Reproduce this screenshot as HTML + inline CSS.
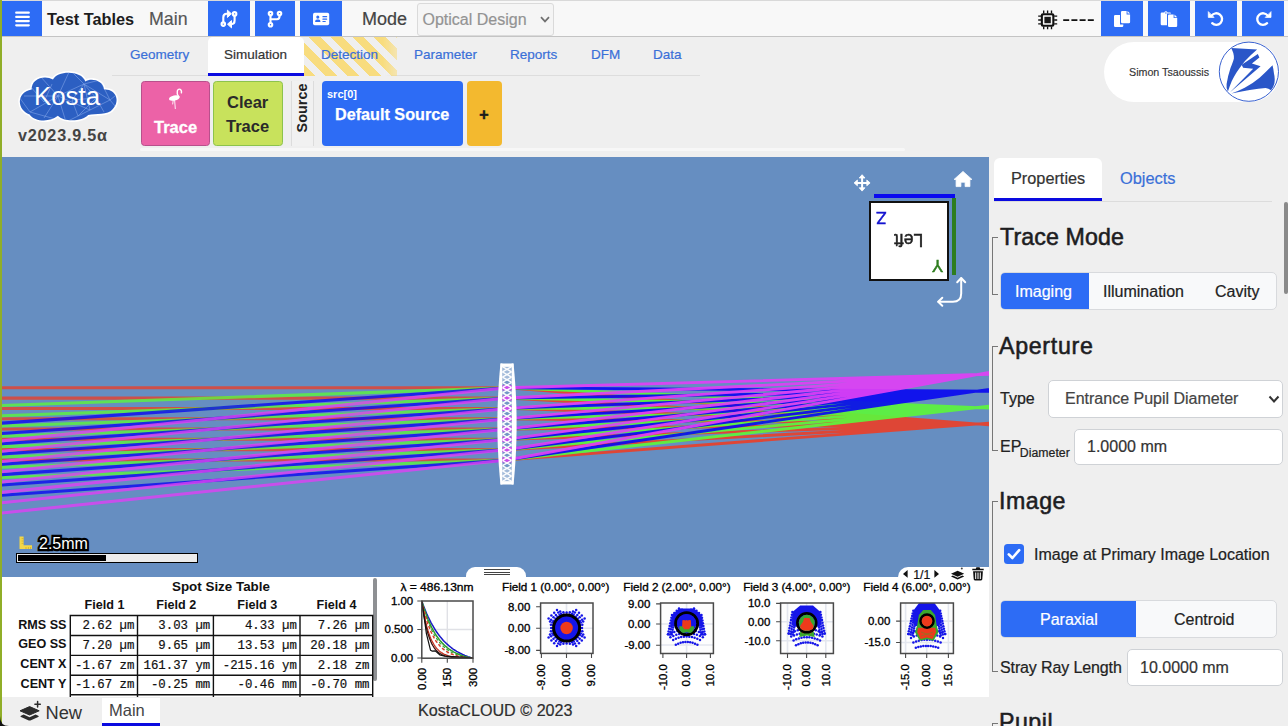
<!DOCTYPE html>
<html><head><meta charset="utf-8">
<style>
*{box-sizing:border-box;margin:0;padding:0}
html,body{width:1288px;height:726px;overflow:hidden;background:#efefef;font-family:"Liberation Sans",sans-serif;color:#222}
.abs{position:absolute}
#strip{left:0;top:0;width:2px;height:726px;background:#90ae28}
#topbar{left:2px;top:0;width:1286px;height:37px;background:#f8f8f8;border-top:1px solid #d9d9d9;border-bottom:1px solid #c4c4c4}
.bbtn{position:absolute;top:1px;height:35.2px;background:#2d6cf5}
.t{position:absolute;white-space:nowrap;line-height:1}
#viewport{left:2px;top:157px;width:987px;height:420px;background:#668ec1;overflow:hidden}
.tab{position:absolute;font-size:13.5px;-webkit-text-stroke:0.2px;color:#3a6fd8;white-space:nowrap;line-height:1}
.fs{position:absolute;border-left:1px solid #777;width:6px}
.fs:before,.fs:after{content:"";position:absolute;left:0;width:5px;height:1px;background:#777}
.fs:before{top:0}.fs:after{bottom:0}
.h2{position:absolute;font-weight:normal;font-size:23.2px;line-height:1;color:#1d1d1f;white-space:nowrap;letter-spacing:-0.1px;-webkit-text-stroke:0.55px #1d1d1f}
.inp{position:absolute;background:#fff;border:1px solid #cfd2d6;border-radius:5px}
.lbl{position:absolute;-webkit-text-stroke:0.22px;font-size:16px;line-height:1;color:#222;white-space:nowrap}
.bg{position:absolute;border:1px solid #d8dadd;border-radius:5px;background:#f8f9fa;overflow:hidden}
.bg .on{position:absolute;left:-1px;top:-1px;bottom:-1px;background:#2d6cf5}
table.sp{position:absolute;border-collapse:collapse;font-family:"Liberation Mono",monospace;font-size:12.4px}
</style></head><body>
<div id="strip" class="abs"></div>
<div id="topbar" class="abs"></div>

<!-- hamburger -->
<div class="bbtn" style="left:2px;width:40px">
<svg class="abs" style="left:10px;top:10px" width="22" height="17" viewBox="0 0 22 17"><path d="M4.2 1.7H16.8M4.2 5.9H16.8M4.2 10.1H16.8M4.2 14.3H16.8" stroke="#fff" stroke-width="2.2" stroke-linecap="round"/></svg>
</div>
<div class="t" style="left:47px;top:11px;font-size:16.3px;font-weight:bold;color:#1c1c1e">Test Tables</div>
<div class="t" style="left:149px;top:11.2px;font-size:17.8px;color:#555;-webkit-text-stroke:0.15px #555">Main</div>

<div class="bbtn" style="left:208px;width:42px" id="b1"></div>
<div class="bbtn" style="left:255px;width:40px" id="b2"></div>
<div class="bbtn" style="left:300px;width:42px" id="b3"></div>
<div class="t" style="left:362px;top:10px;font-size:18px;color:#444;-webkit-text-stroke:0.2px #444">Mode</div>
<div class="abs" style="left:417px;top:2.6px;width:136.5px;height:33.4px;border:1px solid #dadada;border-radius:3px;background:#f5f5f5"></div>
<div class="t" style="left:422.5px;top:11.8px;font-size:16px;color:#939393;-webkit-text-stroke:0.2px #939393">Optical Design</div>
<svg class="abs" style="left:540px;top:16px" width="10" height="8" viewBox="0 0 10 8"><path d="M1 1.2L5 5.4L9 1.2" stroke="#707070" stroke-width="1.7" fill="none"/></svg>

<div class="bbtn" style="left:1101px;width:42px" id="b4"></div>
<div class="bbtn" style="left:1148px;width:42px" id="b5"></div>
<div class="bbtn" style="left:1195px;width:42px" id="b6"></div>
<div class="bbtn" style="left:1242px;width:42px" id="b7"></div>


<svg class="abs" style="left:0;top:0" width="1288" height="40" viewBox="0 0 1288 40" fill="none" stroke="#fff" stroke-linecap="round" stroke-linejoin="round">
<!-- code-compare -->
<g stroke-width="2.1">
<circle cx="223.3" cy="24.1" r="1.75"/>
<circle cx="234.6" cy="13.9" r="1.75"/>
<path d="M223.3 22.2V17.4Q223.3 13.8 226.6 13.8H228"/>
<path d="M234.6 15.8V20.6Q234.6 24.2 231.3 24.2H230.4"/>
</g>
<path d="M227.7 10.4L231.4 13.8L227.7 17.2Z" fill="#fff" stroke-width="1"/>
<path d="M231.2 20.8L227.5 24.2L231.2 27.6Z" fill="#fff" stroke-width="1"/>
<!-- code-branch -->
<g stroke-width="2.1">
<circle cx="270.5" cy="13.6" r="1.75"/>
<circle cx="279.5" cy="13.6" r="1.75"/>
<circle cx="270.5" cy="24.8" r="1.75"/>
<path d="M270.5 15.6V22.8"/>
<path d="M279.5 15.6V16.6Q279.5 19.2 277 19.2H270.6"/>
</g>
<!-- address card -->
<rect x="313" y="12.8" width="16.2" height="12.4" rx="1.7" fill="#fff" stroke="none"/>
<g stroke="none" fill="#2d6cf5">
<circle cx="317.8" cy="17.1" r="1.55"/>
<path d="M315.1 21.9Q315.1 19.6 317 19.6H318.6Q320.5 19.6 320.5 21.9Z"/>
<rect x="322.4" y="16.1" width="4.8" height="1.2" rx="0.5"/>
<rect x="322.4" y="18.5" width="4.8" height="1.2" rx="0.5"/>
<rect x="322.4" y="20.9" width="3.4" height="1.2" rx="0.5"/>
</g>
<!-- chip -->
<g stroke="#111" stroke-width="1.35" stroke-linecap="butt">
<path d="M1043.7 10.6V13.4M1047.6 10.6V13.4M1051.5 10.6V13.4M1043.7 26.6V29.2M1047.6 26.6V29.2M1051.5 26.6V29.2M1038.2 16.1H1041M1038.2 20H1041M1038.2 23.9H1041M1054.2 16.1H1057.2M1054.2 20H1057.2M1054.2 23.9H1057.2"/>
</g>
<rect x="1040.8" y="13.2" width="13.6" height="13.6" rx="2" fill="#111" stroke="none"/>
<rect x="1042.9" y="15.3" width="9.4" height="9.4" rx="0.6" fill="#f8f8f8" stroke="none"/>
<rect x="1044.4" y="16.8" width="6.4" height="6.4" fill="#1a1a1a" stroke="none"/>
<path d="M1063.2 20.2H1095" stroke="#111" stroke-width="1.8" stroke-dasharray="6 2.2" stroke-linecap="butt"/>
<!-- copy -->
<g stroke="none" fill="#fff">
<path d="M1115.2 15H1120V24.4H1123.3V25.8Q1123.3 27 1122.1 27H1115.2Q1114 27 1114 25.8V16.2Q1114 15 1115.2 15Z"/>
<path d="M1122.2 10.9H1126.6V14.4H1130.1V22Q1130.1 23.2 1128.9 23.2H1122.2Q1121 23.2 1121 22V12.1Q1121 10.9 1122.2 10.9Z"/>
<path d="M1127.5 10.9L1130.1 13.5H1127.5Z"/>
</g>
<!-- paste -->
<g stroke="none" fill="#fff">
<path d="M1161.9 12.4H1164.3Q1164.6 11.3 1165.9 11.3Q1167.2 11.3 1167.5 12.4H1169.9Q1171.1 12.4 1171.1 13.6H1167V25.2H1161.9Q1160.7 25.2 1160.7 24V13.6Q1160.7 12.4 1161.9 12.4Z"/>
<path d="M1169.2 14.6H1173.6V18.1H1177.2V25.8Q1177.2 27 1176 27H1169.2Q1168 27 1168 25.8V15.8Q1168 14.6 1169.2 14.6Z"/>
<path d="M1174.5 14.6L1177.2 17.3H1174.5Z"/>
</g>
<circle cx="1165.9" cy="13" r="0.7" fill="#2d6cf5" stroke="none"/>
<!-- undo -->
<path d="M1211.6 15.6A5.8 5.8 0 1 1 1212.2 23.2" stroke-width="2.35"/>
<path d="M1208.3 12V17.4H1213.7Z" fill="#fff" stroke-width="0.8"/>
<!-- redo -->
<path d="M1267.7 15.6A5.8 5.8 0 1 0 1267.1 23.2" stroke-width="2.35"/>
<path d="M1271 12V17.4H1265.6Z" fill="#fff" stroke-width="0.8"/>
</svg>

<!-- tabs row -->
<div class="abs" style="left:112px;top:75px;width:588px;height:1px;background:#dddddd"></div>
<div class="tab" style="left:130px;top:47.7px">Geometry</div>
<div class="abs" style="left:208px;top:37px;width:96px;height:39px;background:#fff;border-radius:5px 5px 0 0;border-bottom:3.5px solid #0a0ae0"></div>
<div class="tab" style="left:224px;top:47.7px;color:#333">Simulation</div>
<div class="abs" style="left:304px;top:37px;width:93px;height:38.5px;-webkit-mask-image:linear-gradient(90deg,#000 85%,rgba(0,0,0,.55));background:repeating-linear-gradient(45deg,#f8dc7e 0 8.4px,#efefef 8.4px 15.4px)"></div>
<div class="tab" style="left:321px;top:47.7px">Detection</div>
<div class="tab" style="left:414px;top:47.7px">Parameter</div>
<div class="tab" style="left:510px;top:47.7px">Reports</div>
<div class="tab" style="left:591px;top:47.7px">DFM</div>
<div class="tab" style="left:653px;top:47.7px">Data</div>

<!-- toolbar -->
<div class="abs" style="left:141px;top:81px;width:69px;height:65px;background:#ec62a7;border:1px solid #b8508c;border-radius:3.5px"></div>
<div class="t" style="left:154px;top:119px;font-size:16.5px;font-weight:bold;color:#fff;-webkit-text-stroke:0.3px #fff">Trace</div>
<div class="abs" style="left:213px;top:81px;width:70px;height:65px;background:#c8e25c;border:1px solid #8dc34c;border-radius:3.5px"></div>
<div class="t" style="left:227px;top:94px;font-size:16.5px;font-weight:bold;color:#2a2a2a">Clear</div>
<div class="t" style="left:226px;top:118px;font-size:16.5px;font-weight:bold;color:#2a2a2a">Trace</div>
<div class="abs" style="left:291px;top:81px;width:23px;height:65px;border-left:1px solid #dcdcdc;border-right:1px solid #dcdcdc;background:#f1f1f1"></div>
<div class="t" style="left:302px;top:108px;font-size:14.4px;font-weight:bold;color:#222;transform:translate(-50%,-50%) rotate(-90deg)">Source</div>
<div class="abs" style="left:322px;top:81px;width:141px;height:65px;background:#2d6cf5;border-radius:4px"></div>
<div class="t" style="left:327px;top:89px;font-size:11px;font-weight:bold;color:#fff">src[0]</div>
<div class="t" style="left:335px;top:106px;font-size:16.2px;font-weight:bold;color:#fff;-webkit-text-stroke:0.25px #fff">Default Source</div>
<div class="abs" style="left:466.5px;top:81px;width:35.5px;height:65px;background:#f3b92f;border-radius:4px"></div>
<div class="t" style="left:479.3px;top:106.5px;font-size:16px;font-weight:bold;color:#1c1c1c;-webkit-text-stroke:0.5px #1c1c1c">+</div>
<div class="abs" style="left:140px;top:148px;width:765px;height:3px;background:#f7f7f7;border-radius:2px"></div>

<!-- logo -->
<svg class="abs" style="left:14px;top:68px" width="110" height="58" viewBox="14 68 110 58">
<defs><clipPath id="cl"><path id="cloudp" d="M31.7 89.6C31 78.5 45 74.5 53 79.6C56.5 70.5 81.5 69.5 85.4 81.5C90.5 77.5 103.5 80 104 89.6C115.5 88.5 121 101 112.6 109.2C108 115.2 95.5 113.4 88.2 115C82 122 63.5 122 57.9 115.8C50 122.3 35 122 29.6 114.4C17.2 110.5 15.4 92.5 31.7 89.6Z"/></clipPath></defs>
<path d="M31.7 89.6C31 78.5 45 74.5 53 79.6C56.5 70.5 81.5 69.5 85.4 81.5C90.5 77.5 103.5 80 104 89.6C115.5 88.5 121 101 112.6 109.2C108 115.2 95.5 113.4 88.2 115C82 122 63.5 122 57.9 115.8C50 122.3 35 122 29.6 114.4C17.2 110.5 15.4 92.5 31.7 89.6Z" fill="#fff" stroke="#fff" stroke-width="3.2" stroke-linejoin="round"/>
<path d="M31.7 89.6C31 78.5 45 74.5 53 79.6C56.5 70.5 81.5 69.5 85.4 81.5C90.5 77.5 103.5 80 104 89.6C115.5 88.5 121 101 112.6 109.2C108 115.2 95.5 113.4 88.2 115C82 122 63.5 122 57.9 115.8C50 122.3 35 122 29.6 114.4C17.2 110.5 15.4 92.5 31.7 89.6Z" fill="#2c5fc2"/>
<g clip-path="url(#cl)" stroke="#8aacec" stroke-width="0.6" opacity="0.9" fill="none">
<path d="M14 90L40 76L58 96L30 112ZM40 76L70 70L58 96L84 84L70 70M84 84L100 80L110 100L84 84L90 110L58 96L66 122L30 112M90 110L110 100L120 112M66 122L90 110M24 96L58 96M44 118L58 96M100 80L120 92L110 100M30 86L44 102L52 84M72 100L84 84L96 98L72 100L78 116L96 98L104 112"/>
</g>
<text x="34" y="105.2" font-family="Liberation Sans, sans-serif" font-size="25.5" fill="#fff" textLength="66" lengthAdjust="spacingAndGlyphs">Kosta</text>
</svg>
<div class="t" style="left:18px;top:127px;font-size:16.2px;font-weight:bold;color:#444;letter-spacing:0.78px">v2023.9.5α</div>

<!-- user -->
<div class="abs" style="left:1104px;top:42px;width:176px;height:60px;background:#fff;border-radius:30px"></div>
<div class="t" style="left:1129px;top:67px;font-size:10.7px;color:#333;-webkit-text-stroke:0.15px #333">Simon Tsaoussis</div>
<svg class="abs" style="left:1218px;top:41px" width="62" height="62" viewBox="0 0 62 62">
<circle cx="30.9" cy="30.7" r="29.6" fill="#fff" stroke="#3a62d0" stroke-width="1"/>
<g fill="#2a56c8">
<path d="M13.3 6.9L39.1 8.4Q33 13.5 27 20Q18 31 13.8 40Q11.5 45.5 9.9 50.6Q8 47 8.6 43Q9.8 35 12.5 27Q15.2 20.5 15.9 17.5Q16 14.5 15.3 11.9Z"/>
<path d="M39.8 13.1L23.7 23.8L25.1 26.8L35.2 27.7L11.8 51.4L42.6 25.3L33.9 22.6L41.4 16.6Z"/>
<path d="M54.5 24.3Q48 31 41.6 36.7Q34 43 26.7 46.8Q20 50.3 13.3 52.6Q22 50.5 31.7 49Q41 47.3 47.6 46.9Q50.5 47.3 53 49.3Q55.5 46 56.4 42.4Q57.2 37 56 32.7Q55.6 28.5 54.5 24.3Z"/>
</g></svg>

<!-- viewport -->
<div id="viewport" class="abs"></div>
<svg class="abs" style="left:0;top:0" width="1288" height="726" viewBox="0 0 1288 726" font-family="Liberation Sans, sans-serif">
<defs><clipPath id="vp"><rect x="2" y="157" width="987" height="420"/></clipPath></defs>
<g clip-path="url(#vp)">
<path d="M0,387.80L507.0,387.80M0,398.10L507.0,398.10M0,408.40L507.0,408.40M0,418.70L507.0,418.70M0,429.00L507.0,429.00M0,439.30L507.0,439.30M0,449.60L507.0,449.60M0,459.90L507.0,459.90" stroke="#e8402a" stroke-width="3.05" stroke-opacity="0.8" fill="none"/>
<path d="M0,405.50L507.0,387.80M0,415.80L507.0,398.10M0,426.10L507.0,408.40M0,436.40L507.0,418.70M0,446.70L507.0,429.00M0,457.00L507.0,439.30M0,467.30L507.0,449.60M0,477.60L507.0,459.90" stroke="#5cf53c" stroke-width="3.05" stroke-opacity="0.8" fill="none"/>
<path d="M0,423.25L507.0,387.80M0,433.55L507.0,398.10M0,443.85L507.0,408.40M0,454.15L507.0,418.70M0,464.45L507.0,429.00M0,474.75L507.0,439.30M0,485.05L507.0,449.60M0,495.35L507.0,459.90" stroke="#0a0af0" stroke-width="3.05" stroke-opacity="0.8" fill="none"/>
<path d="M0,441.09L507.0,387.80M0,451.39L507.0,398.10M0,461.69L507.0,408.40M0,471.99L507.0,418.70M0,482.29L507.0,429.00M0,492.59L507.0,439.30M0,502.89L507.0,449.60M0,513.19L507.0,459.90" stroke="#e040f5" stroke-width="3.05" stroke-opacity="0.8" fill="none"/>
<path d="M507.0,387.80L994,425.31M507.0,398.10L994,424.94M507.0,408.40L994,424.56M507.0,418.70L994,424.19M507.0,429.00L994,423.82M507.0,439.30L994,423.45M507.0,449.60L994,423.07M507.0,459.90L994,422.70" stroke="#e8402a" stroke-width="2.85" stroke-opacity="0.92" fill="none"/>
<path d="M507.0,387.80L994,408.30M507.0,398.10L994,407.93M507.0,408.40L994,407.56M507.0,418.70L994,407.19M507.0,429.00L994,406.81M507.0,439.30L994,406.44M507.0,449.60L994,406.07M507.0,459.90L994,405.70" stroke="#5cf53c" stroke-width="2.85" stroke-opacity="0.92" fill="none"/>
<path d="M507.0,387.80L994,391.26M507.0,398.10L994,390.88M507.0,408.40L994,390.51M507.0,418.70L994,390.14M507.0,429.00L994,389.76M507.0,439.30L994,389.39M507.0,449.60L994,389.02M507.0,459.90L994,388.65" stroke="#0a0af0" stroke-width="2.85" stroke-opacity="0.92" fill="none"/>
<path d="M507.0,387.80L994,374.12M507.0,398.10L994,373.75M507.0,408.40L994,373.38M507.0,418.70L994,373.01M507.0,429.00L994,372.63M507.0,439.30L994,372.26M507.0,449.60L994,371.89M507.0,459.90L994,371.52" stroke="#e040f5" stroke-width="2.85" stroke-opacity="0.92" fill="none"/>
<path d="M500.50,363.50L500.00,368.54L499.55,373.58L499.14,378.62L498.78,383.67L498.45,388.71L498.18,393.75L497.94,398.79L497.74,403.83L497.59,408.88L497.49,413.92L497.42,418.96L497.40,424.00L497.42,429.04L497.49,434.08L497.59,439.12L497.74,444.17L497.94,449.21L498.18,454.25L498.45,459.29L498.78,464.33L499.14,469.38L499.55,474.42L500.00,479.46L500.50,484.50L502.40,484.50L502.40,479.46L502.40,474.42L502.40,469.38L502.40,464.33L502.40,459.29L502.40,454.25L502.40,449.21L502.40,444.17L502.40,439.12L502.40,434.08L502.40,429.04L502.40,424.00L502.40,418.96L502.40,413.92L502.40,408.88L502.40,403.83L502.40,398.79L502.40,393.75L502.40,388.71L502.40,383.67L502.40,378.62L502.40,373.58L502.40,368.54L502.40,363.50Z" fill="#fff"/>
<path d="M513.50,363.50L514.00,368.54L514.45,373.58L514.86,378.62L515.22,383.67L515.55,388.71L515.83,393.75L516.06,398.79L516.26,403.83L516.41,408.88L516.51,413.92L516.58,418.96L516.60,424.00L516.58,429.04L516.51,434.08L516.41,439.12L516.26,444.17L516.06,449.21L515.83,454.25L515.55,459.29L515.22,464.33L514.86,469.38L514.45,474.42L514.00,479.46L513.50,484.50L511.60,484.50L511.60,479.46L511.60,474.42L511.60,469.38L511.60,464.33L511.60,459.29L511.60,454.25L511.60,449.21L511.60,444.17L511.60,439.12L511.60,434.08L511.60,429.04L511.60,424.00L511.60,418.96L511.60,413.92L511.60,408.88L511.60,403.83L511.60,398.79L511.60,393.75L511.60,388.71L511.60,383.67L511.60,378.62L511.60,373.58L511.60,368.54L511.60,363.50Z" fill="#fff"/>
<rect x="500.5" y="363.5" width="13.0" height="3.4" fill="#fff"/>
<rect x="500.5" y="481.1" width="13.0" height="3.4" fill="#fff"/>
<rect x="502.4" y="385.20" width="9.2" height="5.2" fill="#c63fe8"/>
<rect x="502.4" y="395.50" width="9.2" height="5.2" fill="#c63fe8"/>
<rect x="502.4" y="405.80" width="9.2" height="5.2" fill="#c63fe8"/>
<rect x="502.4" y="416.10" width="9.2" height="5.2" fill="#c63fe8"/>
<rect x="502.4" y="426.40" width="9.2" height="5.2" fill="#c63fe8"/>
<rect x="502.4" y="436.70" width="9.2" height="5.2" fill="#c63fe8"/>
<rect x="502.4" y="447.00" width="9.2" height="5.2" fill="#c63fe8"/>
<rect x="502.4" y="457.30" width="9.2" height="5.2" fill="#c63fe8"/>
<path d="M502.4,366.70L511.6,371.91M511.6,366.70L502.4,371.91M502.4,371.91L511.6,377.12M511.6,371.91L502.4,377.12M502.4,377.12L511.6,382.33M511.6,377.12L502.4,382.33M502.4,382.33L511.6,387.54M511.6,382.33L502.4,387.54M502.4,387.54L511.6,392.75M511.6,387.54L502.4,392.75M502.4,392.75L511.6,397.95M511.6,392.75L502.4,397.95M502.4,397.95L511.6,403.16M511.6,397.95L502.4,403.16M502.4,403.16L511.6,408.37M511.6,403.16L502.4,408.37M502.4,408.37L511.6,413.58M511.6,408.37L502.4,413.58M502.4,413.58L511.6,418.79M511.6,413.58L502.4,418.79M502.4,418.79L511.6,424.00M511.6,418.79L502.4,424.00M502.4,424.00L511.6,429.21M511.6,424.00L502.4,429.21M502.4,429.21L511.6,434.42M511.6,429.21L502.4,434.42M502.4,434.42L511.6,439.63M511.6,434.42L502.4,439.63M502.4,439.63L511.6,444.84M511.6,439.63L502.4,444.84M502.4,444.84L511.6,450.05M511.6,444.84L502.4,450.05M502.4,450.05L511.6,455.25M511.6,450.05L502.4,455.25M502.4,455.25L511.6,460.46M511.6,455.25L502.4,460.46M502.4,460.46L511.6,465.67M511.6,460.46L502.4,465.67M502.4,465.67L511.6,470.88M511.6,465.67L502.4,470.88M502.4,470.88L511.6,476.09M511.6,470.88L502.4,476.09M502.4,476.09L511.6,481.30M511.6,476.09L502.4,481.30" stroke="#fff" stroke-width="1.45" fill="none" opacity="0.96"/>
<rect x="502.4" y="366.7" width="9.2" height="14" fill="#fff" opacity="0.35"/>
<rect x="502.4" y="467.3" width="9.2" height="14" fill="#fff" opacity="0.35"/>
<rect x="502.4" y="366.7" width="9.2" height="114.60000000000002" fill="#fff" opacity="0.08"/>
</g>
</svg>

<!-- view cube -->
<div class="abs" style="left:874px;top:194px;width:81px;height:4px;background:#0a0af0"></div>
<div class="abs" style="left:952px;top:198px;width:4px;height:77px;background:#2e7d1e"></div>
<div class="abs" style="left:869px;top:201px;width:80px;height:80px;background:#fff;border:2px solid #111"></div>
<div class="t" style="left:876px;top:209px;font-size:17px;color:#1414d0;-webkit-text-stroke:0.5px #1414d0;transform:rotate(180deg)">Z</div>
<div class="t" style="left:894px;top:230px;font-size:17.6px;color:#222;-webkit-text-stroke:0.45px #222;transform:rotate(180deg)">Left</div>
<div class="t" style="left:932px;top:257px;font-size:17px;color:#2e7d1e;-webkit-text-stroke:0.5px #2e7d1e;transform:rotate(180deg)">Y</div>

<!-- scale bar -->
<div class="abs" style="left:16.2px;top:553px;width:181.6px;height:9.8px;background:#ececec;border:1px solid #000"></div>
<div class="abs" style="left:18.3px;top:555px;width:87.7px;height:5.8px;background:#000"></div>
<svg class="abs" style="left:30px;top:530px" width="70" height="26" viewBox="0 0 70 26"><text x="9" y="19" font-family="Liberation Sans, sans-serif" font-size="16" fill="#fff" stroke="#000" stroke-width="4.4" paint-order="stroke" stroke-linejoin="miter">2.5mm</text></svg>
<svg class="abs" style="left:19px;top:536px" width="14" height="14" viewBox="0 0 14 14"><path d="M0.5 0.5H4.6V9.2H13V13H0.5Z" fill="#f2d648"/><path d="M2.6 2.6H4.6M2.6 5H4.6M2.6 7.4H4.6M7 11V13M9.4 11V13M11.6 11V13" stroke="#c9a92c" stroke-width="0.7"/></svg>

<!-- bottom panel -->
<div class="abs" style="left:2px;top:576.5px;width:987px;height:120.9px;background:#fff"></div>
<div class="abs" style="left:466px;top:567px;width:60px;height:12px;background:#fff;border-radius:9px 9px 0 0"></div>
<div class="abs" style="left:483.5px;top:569px;width:26px;height:1px;background:#444"></div>
<div class="abs" style="left:483.5px;top:571.7px;width:26px;height:1px;background:#444"></div>
<div class="abs" style="left:483.5px;top:574.4px;width:26px;height:1px;background:#444"></div>
<div class="abs" style="left:898px;top:566.5px;width:91px;height:14px;background:#fff;border-radius:10px 0 0 0"></div>
<div class="t" style="left:913.2px;top:568.6px;font-size:12.3px;color:#111;-webkit-text-stroke:0.2px #111">1/1</div>


<div class="abs" style="left:373.2px;top:577.5px;width:3.8px;height:103.8px;background:#8e9093;border-radius:2px"></div>

<div class="t" style="left:172px;top:580px;font-size:13.4px;font-weight:bold;color:#111">Spot Size Table</div>
<svg class="abs" style="left:0;top:0" width="400" height="726" viewBox="0 0 400 726"><defs><clipPath id="tb"><rect x="2" y="577" width="372" height="120"/></clipPath></defs><g clip-path="url(#tb)">
<path d="M70.3,614.8V700M137.5,614.8V700M213.4,614.8V700M300.0,614.8V700M372.7,614.8V700M69.6,615.5H373.4M69.6,635.5H373.4M69.6,655.4H373.4M69.6,675.3H373.4M69.6,694.8H373.4" stroke="#111" stroke-width="1.4" fill="none"/></g></svg>
<div class="t" style="left:104.5px;top:599.3px;font-size:12.6px;font-weight:bold;color:#111;transform:translateX(-50%)">Field 1</div>
<div class="t" style="left:176.2px;top:599.3px;font-size:12.6px;font-weight:bold;color:#111;transform:translateX(-50%)">Field 2</div>
<div class="t" style="left:257.3px;top:599.3px;font-size:12.6px;font-weight:bold;color:#111;transform:translateX(-50%)">Field 3</div>
<div class="t" style="left:336.5px;top:599.3px;font-size:12.6px;font-weight:bold;color:#111;transform:translateX(-50%)">Field 4</div>
<div class="t" style="right:1221.5px;top:618.5px;font-size:12.6px;font-weight:bold;color:#111">RMS SS</div>
<div class="t" style="right:1153.7px;top:619.8px;-webkit-text-stroke:0.2px #111;font-family:'Liberation Mono',monospace;font-size:12.35px;color:#111;white-space:pre">2.62 µm</div>
<div class="t" style="right:1077.8px;top:619.8px;-webkit-text-stroke:0.2px #111;font-family:'Liberation Mono',monospace;font-size:12.35px;color:#111;white-space:pre">3.03 µm</div>
<div class="t" style="right:991.2px;top:619.8px;-webkit-text-stroke:0.2px #111;font-family:'Liberation Mono',monospace;font-size:12.35px;color:#111;white-space:pre">4.33 µm</div>
<div class="t" style="right:918.5px;top:619.8px;-webkit-text-stroke:0.2px #111;font-family:'Liberation Mono',monospace;font-size:12.35px;color:#111;white-space:pre">7.26 µm</div>
<div class="t" style="right:1221.5px;top:638.45px;font-size:12.6px;font-weight:bold;color:#111">GEO SS</div>
<div class="t" style="right:1153.7px;top:639.75px;-webkit-text-stroke:0.2px #111;font-family:'Liberation Mono',monospace;font-size:12.35px;color:#111;white-space:pre">7.20 µm</div>
<div class="t" style="right:1077.8px;top:639.75px;-webkit-text-stroke:0.2px #111;font-family:'Liberation Mono',monospace;font-size:12.35px;color:#111;white-space:pre">9.65 µm</div>
<div class="t" style="right:991.2px;top:639.75px;-webkit-text-stroke:0.2px #111;font-family:'Liberation Mono',monospace;font-size:12.35px;color:#111;white-space:pre">13.53 µm</div>
<div class="t" style="right:918.5px;top:639.75px;-webkit-text-stroke:0.2px #111;font-family:'Liberation Mono',monospace;font-size:12.35px;color:#111;white-space:pre">20.18 µm</div>
<div class="t" style="right:1221.5px;top:658.3499999999999px;font-size:12.6px;font-weight:bold;color:#111">CENT X</div>
<div class="t" style="right:1153.7px;top:659.6499999999999px;-webkit-text-stroke:0.2px #111;font-family:'Liberation Mono',monospace;font-size:12.35px;color:#111;white-space:pre">-1.67 zm</div>
<div class="t" style="right:1077.8px;top:659.6499999999999px;-webkit-text-stroke:0.2px #111;font-family:'Liberation Mono',monospace;font-size:12.35px;color:#111;white-space:pre">161.37 ym</div>
<div class="t" style="right:991.2px;top:659.6499999999999px;-webkit-text-stroke:0.2px #111;font-family:'Liberation Mono',monospace;font-size:12.35px;color:#111;white-space:pre">-215.16 ym</div>
<div class="t" style="right:918.5px;top:659.6499999999999px;-webkit-text-stroke:0.2px #111;font-family:'Liberation Mono',monospace;font-size:12.35px;color:#111;white-space:pre">2.18 zm</div>
<div class="t" style="right:1221.5px;top:678.05px;font-size:12.6px;font-weight:bold;color:#111">CENT Y</div>
<div class="t" style="right:1153.7px;top:679.3499999999999px;-webkit-text-stroke:0.2px #111;font-family:'Liberation Mono',monospace;font-size:12.35px;color:#111;white-space:pre">-1.67 zm</div>
<div class="t" style="right:1077.8px;top:679.3499999999999px;-webkit-text-stroke:0.2px #111;font-family:'Liberation Mono',monospace;font-size:12.35px;color:#111;white-space:pre">-0.25 mm</div>
<div class="t" style="right:991.2px;top:679.3499999999999px;-webkit-text-stroke:0.2px #111;font-family:'Liberation Mono',monospace;font-size:12.35px;color:#111;white-space:pre">-0.46 mm</div>
<div class="t" style="right:918.5px;top:679.3499999999999px;-webkit-text-stroke:0.2px #111;font-family:'Liberation Mono',monospace;font-size:12.35px;color:#111;white-space:pre">-0.70 mm</div>

<svg class="abs" style="left:0;top:0" width="1288" height="726" viewBox="0 0 1288 726" font-family="Liberation Sans, sans-serif" fill="#000">
<defs><clipPath id="bp"><rect x="378" y="577" width="612" height="120"/></clipPath></defs>
<g clip-path="url(#bp)" stroke="#000" stroke-width="0" style="paint-order:stroke">
<rect x="421.8" y="601" width="51.19999999999999" height="57.200000000000045" fill="#fff"/>
<path d="M447.3,601V658.2M421.8,629.5H473.0" stroke="#e0e1e6" stroke-width="1.4" fill="none"/>
<path d="M421.8,601.0L422.8,603.9L423.8,606.6L424.9,609.2L425.9,611.7L426.9,614.1L427.9,616.3L429.0,618.5L430.0,620.6L431.0,622.6L432.0,624.4L433.1,626.2L434.1,628.0L435.1,629.6L436.1,631.2L437.2,632.7L438.2,634.1L439.2,635.5L440.2,636.8L441.3,638.0L442.3,639.2L443.3,640.4L444.3,641.5L445.4,642.5L446.4,643.5L447.4,644.4L448.4,645.3L449.4,646.2L450.5,647.0L451.5,647.8L452.5,648.6L453.5,649.3L454.6,650.0L455.6,650.6L456.6,651.3L457.6,651.9L458.7,652.4L459.7,653.0L460.7,653.5L461.7,654.0L462.8,654.5L463.8,654.9L464.8,655.4L465.8,655.8L466.9,656.2L467.9,656.6L468.9,656.9L469.9,657.3L471.0,657.6L472.0,657.9L473.0,658.2" stroke="#1818c8" stroke-width="1.5" fill="none" stroke-linejoin="round" opacity="1"/>
<path d="M421.8,601.0L422.8,604.5L423.8,607.8L424.9,610.9L425.9,613.8L426.9,616.6L427.9,619.2L429.0,621.6L430.0,623.9L431.0,626.1L432.0,628.2L433.1,630.1L434.1,631.9L435.1,633.6L436.1,635.2L437.2,636.7L438.2,638.1L439.2,639.5L440.2,640.8L441.3,641.9L442.3,643.1L443.3,644.1L444.3,645.1L445.4,646.1L446.4,646.9L447.4,647.8L448.4,648.5L449.4,649.3L450.5,650.0L451.5,650.6L452.5,651.2L453.5,651.8L454.6,652.4L455.6,652.9L456.6,653.4L457.6,653.8L458.7,654.3L459.7,654.7L460.7,655.0L461.7,655.4L462.8,655.7L463.8,656.1L464.8,656.4L465.8,656.6L466.9,656.9L467.9,657.2L468.9,657.4L469.9,657.6L471.0,657.8L472.0,658.0L473.0,658.2" stroke="#2e9e2e" stroke-width="1.5" fill="none" stroke-linejoin="round" opacity="1"/>
<path d="M421.8,601.0L422.8,605.0L423.8,608.7L424.9,612.2L425.9,615.4L426.9,618.4L427.9,621.2L429.0,623.8L430.0,626.3L431.0,628.6L432.0,630.7L433.1,632.7L434.1,634.5L435.1,636.2L436.1,637.8L437.2,639.3L438.2,640.7L439.2,642.0L440.2,643.3L441.3,644.4L442.3,645.4L443.3,646.4L444.3,647.3L445.4,648.2L446.4,649.0L447.4,649.7L448.4,650.4L449.4,651.1L450.5,651.7L451.5,652.2L452.5,652.8L453.5,653.2L454.6,653.7L455.6,654.1L456.6,654.5L457.6,654.9L458.7,655.2L459.7,655.6L460.7,655.9L461.7,656.1L462.8,656.4L463.8,656.6L464.8,656.9L465.8,657.1L466.9,657.3L467.9,657.5L468.9,657.6L469.9,657.8L471.0,657.9L472.0,658.1L473.0,658.2" stroke="#2e9e2e" stroke-width="1.1" fill="none" stroke-linejoin="round" opacity="1" stroke-dasharray="3 2"/>
<path d="M421.8,601.0L422.8,605.7L423.8,610.0L424.9,613.9L425.9,617.6L426.9,620.9L427.9,624.0L429.0,626.8L430.0,629.4L431.0,631.8L432.0,634.0L433.1,636.0L434.1,637.9L435.1,639.6L436.1,641.2L437.2,642.6L438.2,643.9L439.2,645.1L440.2,646.3L441.3,647.3L442.3,648.2L443.3,649.1L444.3,649.9L445.4,650.7L446.4,651.3L447.4,652.0L448.4,652.5L449.4,653.1L450.5,653.5L451.5,654.0L452.5,654.4L453.5,654.8L454.6,655.1L455.6,655.4L456.6,655.7L457.6,656.0L458.7,656.2L459.7,656.5L460.7,656.7L461.7,656.9L462.8,657.1L463.8,657.2L464.8,657.4L465.8,657.5L466.9,657.6L467.9,657.7L468.9,657.9L469.9,658.0L471.0,658.0L472.0,658.1L473.0,658.2" stroke="#d8402c" stroke-width="1.5" fill="none" stroke-linejoin="round" opacity="1" stroke-dasharray="3.2 2"/>
<path d="M421.8,601.0L422.8,607.5L423.8,613.2L424.9,618.3L425.9,622.9L426.9,626.9L427.9,630.4L429.0,633.6L430.0,636.4L431.0,638.9L432.0,641.1L433.1,643.0L434.1,644.8L435.1,646.3L436.1,647.7L437.2,648.9L438.2,649.9L439.2,650.9L440.2,651.7L441.3,652.5L442.3,653.1L443.3,653.7L444.3,654.3L445.4,654.7L446.4,655.1L447.4,655.5L448.4,655.8L449.4,656.1L450.5,656.4L451.5,656.6L452.5,656.8L453.5,657.0L454.6,657.1L455.6,657.2L456.6,657.4L457.6,657.5L458.7,657.6L459.7,657.7L460.7,657.7L461.7,657.8L462.8,657.9L463.8,657.9L464.8,658.0L465.8,658.0L466.9,658.1L467.9,658.1L468.9,658.1L469.9,658.1L471.0,658.2L472.0,658.2L473.0,658.2" stroke="#c8301e" stroke-width="1.3" fill="none" stroke-linejoin="round" opacity="1"/>
<path d="M421.8,601.0L422.8,608.5L423.8,615.0L424.9,620.6L425.9,625.5L426.9,629.8L427.9,633.5L429.0,636.8L430.0,639.6L431.0,642.0L432.0,644.1L433.1,646.0L434.1,647.6L435.1,649.0L436.1,650.2L437.2,651.2L438.2,652.2L439.2,653.0L440.2,653.6L441.3,654.2L442.3,654.8L443.3,655.2L444.3,655.6L445.4,656.0L446.4,656.3L447.4,656.5L448.4,656.7L449.4,656.9L450.5,657.1L451.5,657.3L452.5,657.4L453.5,657.5L454.6,657.6L455.6,657.7L456.6,657.8L457.6,657.8L458.7,657.9L459.7,657.9L460.7,658.0L461.7,658.0L462.8,658.0L463.8,658.1L464.8,658.1L465.8,658.1L466.9,658.1L467.9,658.1L468.9,658.2L469.9,658.2L471.0,658.2L472.0,658.2L473.0,658.2" stroke="#3a1410" stroke-width="1.3" fill="none" stroke-linejoin="round" opacity="1"/>
<path d="M421.8,601.0L424.1,617.0L426.4,633.6L430.5,650.2L432.0,651.1L435.1,650.8L437.2,652.5L439.7,654.8L444.8,656.2L452.5,656.5L462.8,657.1L473.0,658.2" stroke="#111" stroke-width="1.2" fill="none" stroke-linejoin="round" opacity="1"/>
<rect x="421.8" y="601" width="51.19999999999999" height="57.200000000000045" fill="none" stroke="#4a4a4a" stroke-width="1.5"/>
<text x="413.2" y="604.7" stroke="#000" stroke-width="0.3" font-size="10.4" text-anchor="end" textLength="22.3" lengthAdjust="spacingAndGlyphs">1.00</text>
<text x="413.2" y="633.2" stroke="#000" stroke-width="0.3" font-size="10.4" text-anchor="end" textLength="28.6" lengthAdjust="spacingAndGlyphs">0.500</text>
<text x="413.2" y="661.7" stroke="#000" stroke-width="0.3" font-size="10.4" text-anchor="end" textLength="22.3" lengthAdjust="spacingAndGlyphs">0.00</text>
<text transform="translate(425.5,667.8) rotate(-90)" stroke="#000" stroke-width="0.3" font-size="10.4" text-anchor="end" textLength="22.3" lengthAdjust="spacingAndGlyphs">0.00</text>
<text transform="translate(451.0,667.8) rotate(-90)" stroke="#000" stroke-width="0.3" font-size="10.4" text-anchor="end" textLength="19.1" lengthAdjust="spacingAndGlyphs">150</text>
<text transform="translate(476.7,667.8) rotate(-90)" stroke="#000" stroke-width="0.3" font-size="10.4" text-anchor="end" textLength="19.1" lengthAdjust="spacingAndGlyphs">300</text>
<path d="M417.3,601H421.8M417.3,629.5H421.8M417.3,658H421.8M421.8,658.2V662.7M447.3,658.2V662.7M473,658.2V662.7" stroke="#4a4a4a" stroke-width="1.1" fill="none"/>
<text x="437" y="591.4000000000001" stroke="#000" stroke-width="0.3" font-size="10.4" text-anchor="middle" textLength="73.2" lengthAdjust="spacingAndGlyphs">λ = 486.13nm</text>
<rect x="540.6" y="603" width="52.39999999999998" height="50.39999999999998" fill="#fdfdfd"/>
<path d="M566.5,603V653.4M540.6,628.3H593.0" stroke="#e3e6ee" stroke-width="1.6" fill="none"/>
<clipPath id="cp0"><rect x="540.6" y="603" width="52.39999999999998" height="50.39999999999998"/></clipPath>
<g clip-path="url(#cp0)">
<g fill="#1515e8"><circle cx="557.0" cy="610.0" r="1.25"/><circle cx="560.2" cy="611.4" r="1.25"/><circle cx="563.4" cy="612.3" r="1.25"/><circle cx="566.6" cy="612.6" r="1.25"/><circle cx="569.8" cy="612.3" r="1.25"/><circle cx="573.0" cy="611.4" r="1.25"/><circle cx="576.2" cy="610.0" r="1.25"/><circle cx="579.0" cy="612.8" r="1.25"/><circle cx="581.8" cy="615.6" r="1.25"/><circle cx="584.6" cy="618.4" r="1.25"/><circle cx="583.2" cy="621.6" r="1.25"/><circle cx="582.3" cy="624.8" r="1.25"/><circle cx="582.0" cy="628.0" r="1.25"/><circle cx="582.3" cy="631.2" r="1.25"/><circle cx="583.2" cy="634.4" r="1.25"/><circle cx="584.6" cy="637.6" r="1.25"/><circle cx="581.8" cy="640.4" r="1.25"/><circle cx="579.0" cy="643.2" r="1.25"/><circle cx="576.2" cy="646.0" r="1.25"/><circle cx="573.0" cy="644.6" r="1.25"/><circle cx="569.8" cy="643.7" r="1.25"/><circle cx="566.6" cy="643.4" r="1.25"/><circle cx="563.4" cy="643.7" r="1.25"/><circle cx="560.2" cy="644.6" r="1.25"/><circle cx="557.0" cy="646.0" r="1.25"/><circle cx="554.2" cy="643.2" r="1.25"/><circle cx="551.4" cy="640.4" r="1.25"/><circle cx="548.6" cy="637.6" r="1.25"/><circle cx="550.0" cy="634.4" r="1.25"/><circle cx="550.9" cy="631.2" r="1.25"/><circle cx="551.2" cy="628.0" r="1.25"/><circle cx="550.9" cy="624.8" r="1.25"/><circle cx="550.0" cy="621.6" r="1.25"/><circle cx="548.6" cy="618.4" r="1.25"/><circle cx="551.4" cy="615.6" r="1.25"/><circle cx="554.2" cy="612.8" r="1.25"/><circle cx="558.3" cy="612.5" r="1.25"/><circle cx="561.1" cy="613.8" r="1.25"/><circle cx="563.8" cy="614.5" r="1.25"/><circle cx="566.6" cy="614.8" r="1.25"/><circle cx="569.4" cy="614.5" r="1.25"/><circle cx="572.1" cy="613.8" r="1.25"/><circle cx="574.9" cy="612.5" r="1.25"/><circle cx="577.3" cy="614.9" r="1.25"/><circle cx="579.7" cy="617.3" r="1.25"/><circle cx="582.1" cy="619.7" r="1.25"/><circle cx="580.8" cy="622.5" r="1.25"/><circle cx="580.1" cy="625.2" r="1.25"/><circle cx="579.8" cy="628.0" r="1.25"/><circle cx="580.1" cy="630.8" r="1.25"/><circle cx="580.8" cy="633.5" r="1.25"/><circle cx="582.1" cy="636.3" r="1.25"/><circle cx="579.7" cy="638.7" r="1.25"/><circle cx="577.3" cy="641.1" r="1.25"/><circle cx="574.9" cy="643.5" r="1.25"/><circle cx="572.1" cy="642.2" r="1.25"/><circle cx="569.4" cy="641.5" r="1.25"/><circle cx="566.6" cy="641.2" r="1.25"/><circle cx="563.8" cy="641.5" r="1.25"/><circle cx="561.1" cy="642.2" r="1.25"/><circle cx="558.3" cy="643.5" r="1.25"/><circle cx="555.9" cy="641.1" r="1.25"/><circle cx="553.5" cy="638.7" r="1.25"/><circle cx="551.1" cy="636.3" r="1.25"/><circle cx="552.4" cy="633.5" r="1.25"/><circle cx="553.1" cy="630.8" r="1.25"/><circle cx="553.4" cy="628.0" r="1.25"/><circle cx="553.1" cy="625.2" r="1.25"/><circle cx="552.4" cy="622.5" r="1.25"/><circle cx="551.1" cy="619.7" r="1.25"/><circle cx="553.5" cy="617.3" r="1.25"/><circle cx="555.9" cy="614.9" r="1.25"/><circle cx="559.5" cy="614.7" r="1.25"/><circle cx="561.9" cy="615.7" r="1.25"/><circle cx="564.2" cy="616.4" r="1.25"/><circle cx="566.6" cy="616.6" r="1.25"/><circle cx="569.0" cy="616.4" r="1.25"/><circle cx="571.3" cy="615.7" r="1.25"/><circle cx="573.7" cy="614.7" r="1.25"/><circle cx="575.8" cy="616.8" r="1.25"/><circle cx="577.8" cy="618.8" r="1.25"/><circle cx="579.9" cy="620.9" r="1.25"/><circle cx="578.9" cy="623.3" r="1.25"/><circle cx="578.2" cy="625.6" r="1.25"/><circle cx="578.0" cy="628.0" r="1.25"/><circle cx="578.2" cy="630.4" r="1.25"/><circle cx="578.9" cy="632.7" r="1.25"/><circle cx="579.9" cy="635.1" r="1.25"/><circle cx="577.8" cy="637.2" r="1.25"/><circle cx="575.8" cy="639.2" r="1.25"/><circle cx="573.7" cy="641.3" r="1.25"/><circle cx="571.3" cy="640.3" r="1.25"/><circle cx="569.0" cy="639.6" r="1.25"/><circle cx="566.6" cy="639.4" r="1.25"/><circle cx="564.2" cy="639.6" r="1.25"/><circle cx="561.9" cy="640.3" r="1.25"/><circle cx="559.5" cy="641.3" r="1.25"/><circle cx="557.4" cy="639.2" r="1.25"/><circle cx="555.4" cy="637.2" r="1.25"/><circle cx="553.3" cy="635.1" r="1.25"/><circle cx="554.3" cy="632.7" r="1.25"/><circle cx="555.0" cy="630.4" r="1.25"/><circle cx="555.2" cy="628.0" r="1.25"/><circle cx="555.0" cy="625.6" r="1.25"/><circle cx="554.3" cy="623.3" r="1.25"/><circle cx="553.3" cy="620.9" r="1.25"/><circle cx="555.4" cy="618.8" r="1.25"/><circle cx="557.4" cy="616.8" r="1.25"/></g>
<circle cx="566.6" cy="628.0" r="12.5" fill="#1515e8"/>
<circle cx="566.6" cy="628.0" r="13" fill="none" stroke="#000" stroke-width="3"/>
<circle cx="566.6" cy="628.0" r="6.2" fill="#ee3a1c"/>
</g>
<rect x="540.6" y="603" width="52.39999999999998" height="50.39999999999998" fill="none" stroke="#4a4a4a" stroke-width="1.5"/>
<text x="530.3" y="610.5" stroke="#000" stroke-width="0.3" font-size="10.4" text-anchor="end" textLength="22.3" lengthAdjust="spacingAndGlyphs">8.00</text>
<text x="530.3" y="632.0" stroke="#000" stroke-width="0.3" font-size="10.4" text-anchor="end" textLength="22.3" lengthAdjust="spacingAndGlyphs">0.00</text>
<text x="530.3" y="654.1" stroke="#000" stroke-width="0.3" font-size="10.4" text-anchor="end" textLength="25.9" lengthAdjust="spacingAndGlyphs">-8.00</text>
<text transform="translate(545.1,664.2) rotate(-90)" stroke="#000" stroke-width="0.3" font-size="10.4" text-anchor="end" textLength="25.9" lengthAdjust="spacingAndGlyphs">-9.00</text>
<text transform="translate(570.2,664.2) rotate(-90)" stroke="#000" stroke-width="0.3" font-size="10.4" text-anchor="end" textLength="22.3" lengthAdjust="spacingAndGlyphs">0.00</text>
<text transform="translate(595.2,664.2) rotate(-90)" stroke="#000" stroke-width="0.3" font-size="10.4" text-anchor="end" textLength="22.3" lengthAdjust="spacingAndGlyphs">9.00</text>
<path d="M536.1,606.8H540.6M536.1,628.3H540.6M536.1,650.4H540.6M541.4,653.4V657.9M566.5,653.4V657.9M591.5,653.4V657.9" stroke="#4a4a4a" stroke-width="1.1" fill="none"/>
<text x="555.7" y="591.4000000000001" stroke="#000" stroke-width="0.3" font-size="10.4" text-anchor="middle" textLength="107.3" lengthAdjust="spacingAndGlyphs">Field 1 (0.00°, 0.00°)</text>
<rect x="660.6" y="603" width="52.799999999999955" height="50.5" fill="#fdfdfd"/>
<path d="M686.6,603V653.5M660.6,624H713.4M660.6,645H713.4" stroke="#e3e6ee" stroke-width="1.6" fill="none"/>
<clipPath id="cp1"><rect x="660.6" y="603" width="52.799999999999955" height="50.5"/></clipPath>
<g clip-path="url(#cp1)">
<g fill="#1515e8"><circle cx="679.0" cy="608.6" r="1.25"/><circle cx="682.0" cy="609.8" r="1.25"/><circle cx="685.0" cy="610.3" r="1.25"/><circle cx="688.0" cy="610.3" r="1.25"/><circle cx="691.0" cy="609.8" r="1.25"/><circle cx="694.0" cy="608.6" r="1.25"/><circle cx="676.7" cy="610.8" r="1.25"/><circle cx="674.3" cy="612.9" r="1.25"/><circle cx="672.0" cy="615.1" r="1.25"/><circle cx="696.5" cy="610.8" r="1.25"/><circle cx="699.0" cy="612.9" r="1.25"/><circle cx="701.5" cy="615.1" r="1.25"/><circle cx="671.4" cy="617.8" r="1.25"/><circle cx="670.9" cy="620.6" r="1.25"/><circle cx="670.3" cy="623.3" r="1.25"/><circle cx="669.7" cy="626.1" r="1.25"/><circle cx="669.1" cy="628.8" r="1.25"/><circle cx="668.6" cy="631.6" r="1.25"/><circle cx="668.0" cy="634.3" r="1.25"/><circle cx="702.0" cy="617.8" r="1.25"/><circle cx="702.4" cy="620.6" r="1.25"/><circle cx="702.9" cy="623.3" r="1.25"/><circle cx="703.4" cy="626.1" r="1.25"/><circle cx="703.9" cy="628.8" r="1.25"/><circle cx="704.3" cy="631.6" r="1.25"/><circle cx="704.8" cy="634.3" r="1.25"/><circle cx="679.8" cy="610.7" r="1.25"/><circle cx="682.5" cy="611.9" r="1.25"/><circle cx="685.2" cy="612.4" r="1.25"/><circle cx="687.9" cy="612.4" r="1.25"/><circle cx="690.6" cy="611.9" r="1.25"/><circle cx="693.3" cy="610.7" r="1.25"/><circle cx="677.7" cy="612.7" r="1.25"/><circle cx="675.6" cy="614.6" r="1.25"/><circle cx="673.5" cy="616.6" r="1.25"/><circle cx="695.5" cy="612.7" r="1.25"/><circle cx="697.8" cy="614.6" r="1.25"/><circle cx="700.0" cy="616.6" r="1.25"/><circle cx="672.9" cy="619.1" r="1.25"/><circle cx="672.4" cy="621.7" r="1.25"/><circle cx="671.9" cy="624.2" r="1.25"/><circle cx="671.4" cy="626.8" r="1.25"/><circle cx="670.9" cy="629.3" r="1.25"/><circle cx="670.4" cy="631.9" r="1.25"/><circle cx="669.9" cy="634.4" r="1.25"/><circle cx="700.4" cy="619.1" r="1.25"/><circle cx="700.9" cy="621.7" r="1.25"/><circle cx="701.3" cy="624.2" r="1.25"/><circle cx="701.7" cy="626.8" r="1.25"/><circle cx="702.1" cy="629.3" r="1.25"/><circle cx="702.6" cy="631.9" r="1.25"/><circle cx="703.0" cy="634.4" r="1.25"/><circle cx="680.5" cy="612.8" r="1.25"/><circle cx="682.9" cy="614.0" r="1.25"/><circle cx="685.3" cy="614.5" r="1.25"/><circle cx="687.7" cy="614.5" r="1.25"/><circle cx="690.1" cy="614.0" r="1.25"/><circle cx="692.5" cy="612.8" r="1.25"/><circle cx="678.7" cy="614.5" r="1.25"/><circle cx="676.8" cy="616.3" r="1.25"/><circle cx="674.9" cy="618.0" r="1.25"/><circle cx="694.5" cy="614.5" r="1.25"/><circle cx="696.5" cy="616.3" r="1.25"/><circle cx="698.5" cy="618.0" r="1.25"/><circle cx="674.5" cy="620.4" r="1.25"/><circle cx="674.0" cy="622.7" r="1.25"/><circle cx="673.5" cy="625.1" r="1.25"/><circle cx="673.1" cy="627.5" r="1.25"/><circle cx="672.6" cy="629.8" r="1.25"/><circle cx="672.2" cy="632.2" r="1.25"/><circle cx="671.7" cy="634.6" r="1.25"/><circle cx="698.9" cy="620.4" r="1.25"/><circle cx="699.3" cy="622.7" r="1.25"/><circle cx="699.7" cy="625.1" r="1.25"/><circle cx="700.0" cy="627.5" r="1.25"/><circle cx="700.4" cy="629.8" r="1.25"/><circle cx="700.8" cy="632.2" r="1.25"/><circle cx="701.2" cy="634.6" r="1.25"/><circle cx="668.2" cy="634.3" r="1.25"/><circle cx="671.3" cy="633.0" r="1.25"/><circle cx="674.3" cy="632.0" r="1.25"/><circle cx="677.4" cy="631.1" r="1.25"/><circle cx="680.5" cy="630.6" r="1.25"/><circle cx="683.5" cy="630.2" r="1.25"/><circle cx="686.6" cy="630.1" r="1.25"/><circle cx="689.7" cy="630.2" r="1.25"/><circle cx="692.7" cy="630.6" r="1.25"/><circle cx="695.8" cy="631.1" r="1.25"/><circle cx="698.9" cy="632.0" r="1.25"/><circle cx="701.9" cy="633.0" r="1.25"/><circle cx="705.0" cy="634.3" r="1.25"/><circle cx="670.4" cy="637.2" r="1.25"/><circle cx="673.3" cy="635.9" r="1.25"/><circle cx="676.3" cy="634.8" r="1.25"/><circle cx="679.2" cy="634.0" r="1.25"/><circle cx="682.2" cy="633.5" r="1.25"/><circle cx="685.1" cy="633.2" r="1.25"/><circle cx="688.1" cy="633.2" r="1.25"/><circle cx="691.0" cy="633.5" r="1.25"/><circle cx="694.0" cy="634.0" r="1.25"/><circle cx="696.9" cy="634.8" r="1.25"/><circle cx="699.9" cy="635.9" r="1.25"/><circle cx="702.8" cy="637.2" r="1.25"/><circle cx="673.2" cy="640.0" r="1.25"/><circle cx="675.9" cy="638.8" r="1.25"/><circle cx="678.6" cy="637.8" r="1.25"/><circle cx="681.2" cy="637.1" r="1.25"/><circle cx="683.9" cy="636.7" r="1.25"/><circle cx="686.6" cy="636.6" r="1.25"/><circle cx="689.3" cy="636.7" r="1.25"/><circle cx="692.0" cy="637.1" r="1.25"/><circle cx="694.6" cy="637.8" r="1.25"/><circle cx="697.3" cy="638.8" r="1.25"/><circle cx="700.0" cy="640.0" r="1.25"/><circle cx="675.8" cy="644.8" r="1.25"/><circle cx="678.2" cy="643.7" r="1.25"/><circle cx="680.6" cy="642.8" r="1.25"/><circle cx="683.0" cy="642.2" r="1.25"/><circle cx="685.4" cy="641.9" r="1.25"/><circle cx="687.8" cy="641.9" r="1.25"/><circle cx="690.2" cy="642.2" r="1.25"/><circle cx="692.6" cy="642.8" r="1.25"/><circle cx="695.0" cy="643.7" r="1.25"/><circle cx="697.4" cy="644.8" r="1.25"/></g>
<path d="M679.0,608.6L694.0,608.6L701.5,615.1L703.1,626.6L670.3,626.6L672.0,615.1Z" fill="#1515e8"/>
<circle cx="686.6" cy="623.6" r="11" fill="none" stroke="#000" stroke-width="2.9"/>
<circle cx="686.6" cy="623.6" r="9.6" fill="#1515e8"/>
<path d="M679.2,626.2L694.2,626.2Q694.2,631.6 690.1,633.1L686.8000000000001,632.2L683.4,633.1Q679.2,631.6 679.2,626.2Z" fill="#3aa82e"/>
<path d="M682.4,620.2L684.1,620.0L685.4,620.6L686.6,620.0L687.8,620.6L689.1,620.0L690.9,620.2L691.2,626.2L689.0,629.2L684.2,629.2L682.1,626.2Z" fill="#ee3a1c"/>
</g>
<rect x="660.6" y="603" width="52.799999999999955" height="50.5" fill="none" stroke="#4a4a4a" stroke-width="1.5"/>
<text x="650.3" y="607.6" stroke="#000" stroke-width="0.3" font-size="10.4" text-anchor="end" textLength="22.3" lengthAdjust="spacingAndGlyphs">9.00</text>
<text x="650.3" y="627.7" stroke="#000" stroke-width="0.3" font-size="10.4" text-anchor="end" textLength="22.3" lengthAdjust="spacingAndGlyphs">0.00</text>
<text x="650.3" y="648.9000000000001" stroke="#000" stroke-width="0.3" font-size="10.4" text-anchor="end" textLength="25.9" lengthAdjust="spacingAndGlyphs">-9.00</text>
<text transform="translate(666.6,664.2) rotate(-90)" stroke="#000" stroke-width="0.3" font-size="10.4" text-anchor="end" textLength="25.9" lengthAdjust="spacingAndGlyphs">-10.0</text>
<text transform="translate(690.3000000000001,664.2) rotate(-90)" stroke="#000" stroke-width="0.3" font-size="10.4" text-anchor="end" textLength="22.3" lengthAdjust="spacingAndGlyphs">0.00</text>
<text transform="translate(714.1,664.2) rotate(-90)" stroke="#000" stroke-width="0.3" font-size="10.4" text-anchor="end" textLength="22.3" lengthAdjust="spacingAndGlyphs">10.0</text>
<path d="M656.1,603.9H660.6M656.1,624.0H660.6M656.1,645.2H660.6M662.9,653.5V658.0M686.6,653.5V658.0M710.4,653.5V658.0" stroke="#4a4a4a" stroke-width="1.1" fill="none"/>
<text x="677" y="591.4000000000001" stroke="#000" stroke-width="0.3" font-size="10.4" text-anchor="middle" textLength="107.3" lengthAdjust="spacingAndGlyphs">Field 2 (2.00°, 0.00°)</text>
<rect x="780.6" y="603" width="52.799999999999955" height="50.5" fill="#fdfdfd"/>
<path d="M787.5,603V653.5M806.6,603V653.5M825.8,603V653.5M780.6,621.8H833.4M780.6,640.8H833.4" stroke="#e3e6ee" stroke-width="1.6" fill="none"/>
<clipPath id="cp2"><rect x="780.6" y="603" width="52.799999999999955" height="50.5"/></clipPath>
<g clip-path="url(#cp2)">
<g fill="#1515e8"><circle cx="792.4" cy="612.1" r="1.25"/><circle cx="791.9" cy="614.8" r="1.25"/><circle cx="791.4" cy="617.4" r="1.25"/><circle cx="791.0" cy="620.1" r="1.25"/><circle cx="790.5" cy="622.8" r="1.25"/><circle cx="790.0" cy="625.5" r="1.25"/><circle cx="789.5" cy="628.1" r="1.25"/><circle cx="789.1" cy="630.8" r="1.25"/><circle cx="788.6" cy="633.5" r="1.25"/><circle cx="820.4" cy="612.1" r="1.25"/><circle cx="820.9" cy="614.8" r="1.25"/><circle cx="821.4" cy="617.4" r="1.25"/><circle cx="822.0" cy="620.1" r="1.25"/><circle cx="822.5" cy="622.8" r="1.25"/><circle cx="823.0" cy="625.5" r="1.25"/><circle cx="823.5" cy="628.1" r="1.25"/><circle cx="824.1" cy="630.8" r="1.25"/><circle cx="824.6" cy="633.5" r="1.25"/><circle cx="794.1" cy="614.2" r="1.25"/><circle cx="793.7" cy="616.7" r="1.25"/><circle cx="793.3" cy="619.1" r="1.25"/><circle cx="792.9" cy="621.6" r="1.25"/><circle cx="792.5" cy="624.1" r="1.25"/><circle cx="792.0" cy="626.6" r="1.25"/><circle cx="791.6" cy="629.0" r="1.25"/><circle cx="791.2" cy="631.5" r="1.25"/><circle cx="790.8" cy="634.0" r="1.25"/><circle cx="818.8" cy="614.2" r="1.25"/><circle cx="819.2" cy="616.7" r="1.25"/><circle cx="819.7" cy="619.1" r="1.25"/><circle cx="820.2" cy="621.6" r="1.25"/><circle cx="820.6" cy="624.1" r="1.25"/><circle cx="821.1" cy="626.6" r="1.25"/><circle cx="821.5" cy="629.0" r="1.25"/><circle cx="822.0" cy="631.5" r="1.25"/><circle cx="822.5" cy="634.0" r="1.25"/><circle cx="795.9" cy="616.3" r="1.25"/><circle cx="795.5" cy="618.5" r="1.25"/><circle cx="795.1" cy="620.8" r="1.25"/><circle cx="794.8" cy="623.1" r="1.25"/><circle cx="794.4" cy="625.4" r="1.25"/><circle cx="794.1" cy="627.6" r="1.25"/><circle cx="793.7" cy="629.9" r="1.25"/><circle cx="793.3" cy="632.2" r="1.25"/><circle cx="793.0" cy="634.5" r="1.25"/><circle cx="817.1" cy="616.3" r="1.25"/><circle cx="817.5" cy="618.5" r="1.25"/><circle cx="817.9" cy="620.8" r="1.25"/><circle cx="818.3" cy="623.1" r="1.25"/><circle cx="818.7" cy="625.4" r="1.25"/><circle cx="819.1" cy="627.6" r="1.25"/><circle cx="819.5" cy="629.9" r="1.25"/><circle cx="819.9" cy="632.2" r="1.25"/><circle cx="820.3" cy="634.5" r="1.25"/><circle cx="788.9" cy="633.5" r="1.25"/><circle cx="791.9" cy="632.2" r="1.25"/><circle cx="794.9" cy="631.2" r="1.25"/><circle cx="797.8" cy="630.3" r="1.25"/><circle cx="800.8" cy="629.8" r="1.25"/><circle cx="803.8" cy="629.4" r="1.25"/><circle cx="806.8" cy="629.3" r="1.25"/><circle cx="809.8" cy="629.4" r="1.25"/><circle cx="812.8" cy="629.8" r="1.25"/><circle cx="815.8" cy="630.3" r="1.25"/><circle cx="818.7" cy="631.2" r="1.25"/><circle cx="821.7" cy="632.2" r="1.25"/><circle cx="824.7" cy="633.5" r="1.25"/><circle cx="791.2" cy="636.6" r="1.25"/><circle cx="794.0" cy="635.4" r="1.25"/><circle cx="796.9" cy="634.5" r="1.25"/><circle cx="799.7" cy="633.7" r="1.25"/><circle cx="802.5" cy="633.3" r="1.25"/><circle cx="805.4" cy="633.0" r="1.25"/><circle cx="808.2" cy="633.0" r="1.25"/><circle cx="811.1" cy="633.3" r="1.25"/><circle cx="813.9" cy="633.7" r="1.25"/><circle cx="816.7" cy="634.5" r="1.25"/><circle cx="819.6" cy="635.4" r="1.25"/><circle cx="822.4" cy="636.6" r="1.25"/><circle cx="793.6" cy="640.4" r="1.25"/><circle cx="796.2" cy="639.2" r="1.25"/><circle cx="798.9" cy="638.4" r="1.25"/><circle cx="801.5" cy="637.7" r="1.25"/><circle cx="804.2" cy="637.3" r="1.25"/><circle cx="806.8" cy="637.2" r="1.25"/><circle cx="809.4" cy="637.3" r="1.25"/><circle cx="812.1" cy="637.7" r="1.25"/><circle cx="814.7" cy="638.4" r="1.25"/><circle cx="817.4" cy="639.2" r="1.25"/><circle cx="820.0" cy="640.4" r="1.25"/><circle cx="796.0" cy="645.3" r="1.25"/><circle cx="798.4" cy="644.2" r="1.25"/><circle cx="800.8" cy="643.3" r="1.25"/><circle cx="803.2" cy="642.7" r="1.25"/><circle cx="805.6" cy="642.4" r="1.25"/><circle cx="808.0" cy="642.4" r="1.25"/><circle cx="810.4" cy="642.7" r="1.25"/><circle cx="812.8" cy="643.3" r="1.25"/><circle cx="815.2" cy="644.2" r="1.25"/><circle cx="817.6" cy="645.3" r="1.25"/></g>
<path d="M800.2,605.6L813.0,605.6L820.4,612.1L821.4,622.8L819.8,626.8L793.6,626.8L792.0,622.8L792.4,612.1Z" fill="#1515e8"/>
<path d="M800.4,631.4L813.6,631.4L814.8,637.0L807.0,635.4L799.2,637.0Z" fill="#3aa82e"/>
<circle cx="802.8" cy="632.4" r="0.9" fill="#ee3a1c"/><circle cx="810.5999999999999" cy="632.4" r="0.9" fill="#ee3a1c"/>
<circle cx="806.8" cy="622.8" r="9.4" fill="none" stroke="#000" stroke-width="2.7"/>
<circle cx="806.8" cy="622.8" r="8" fill="#3aa82e"/>
<path d="M804.2,618.0L809.6,618.0L810.8,621.8L813.5,625.8L812.9,629.1L809.8,630.6L803.8,630.6L800.7,629.1L800.1,625.8L803.0,621.8Z" fill="#ee3a1c"/>
</g>
<rect x="780.6" y="603" width="52.799999999999955" height="50.5" fill="none" stroke="#4a4a4a" stroke-width="1.5"/>
<text x="770.3" y="607.1" stroke="#000" stroke-width="0.3" font-size="10.4" text-anchor="end" textLength="22.3" lengthAdjust="spacingAndGlyphs">10.0</text>
<text x="770.3" y="625.5" stroke="#000" stroke-width="0.3" font-size="10.4" text-anchor="end" textLength="22.3" lengthAdjust="spacingAndGlyphs">0.00</text>
<text x="770.3" y="644.5" stroke="#000" stroke-width="0.3" font-size="10.4" text-anchor="end" textLength="25.9" lengthAdjust="spacingAndGlyphs">-10.0</text>
<text transform="translate(791.2,664.2) rotate(-90)" stroke="#000" stroke-width="0.3" font-size="10.4" text-anchor="end" textLength="25.9" lengthAdjust="spacingAndGlyphs">-10.0</text>
<text transform="translate(810.3000000000001,664.2) rotate(-90)" stroke="#000" stroke-width="0.3" font-size="10.4" text-anchor="end" textLength="22.3" lengthAdjust="spacingAndGlyphs">0.00</text>
<text transform="translate(829.5,664.2) rotate(-90)" stroke="#000" stroke-width="0.3" font-size="10.4" text-anchor="end" textLength="22.3" lengthAdjust="spacingAndGlyphs">10.0</text>
<path d="M776.1,603.4H780.6M776.1,621.8H780.6M776.1,640.8H780.6M787.5,653.5V658.0M806.6,653.5V658.0M825.8,653.5V658.0" stroke="#4a4a4a" stroke-width="1.1" fill="none"/>
<text x="796.8" y="591.4000000000001" stroke="#000" stroke-width="0.3" font-size="10.4" text-anchor="middle" textLength="107.3" lengthAdjust="spacingAndGlyphs">Field 3 (4.00°, 0.00°)</text>
<rect x="900.6" y="603" width="52.799999999999955" height="50.5" fill="#fdfdfd"/>
<path d="M905.6,603V653.5M926.7,603V653.5M948.4,603V653.5M900.6,621.1H953.4M900.6,642.5H953.4" stroke="#e3e6ee" stroke-width="1.6" fill="none"/>
<clipPath id="cp3"><rect x="900.6" y="603" width="52.799999999999955" height="50.5"/></clipPath>
<g clip-path="url(#cp3)">
<g fill="#1515e8"><circle cx="913.3" cy="610.8" r="1.25"/><circle cx="912.7" cy="613.4" r="1.25"/><circle cx="912.2" cy="615.9" r="1.25"/><circle cx="911.6" cy="618.5" r="1.25"/><circle cx="911.0" cy="621.1" r="1.25"/><circle cx="910.5" cy="623.6" r="1.25"/><circle cx="909.9" cy="626.2" r="1.25"/><circle cx="909.3" cy="628.8" r="1.25"/><circle cx="908.8" cy="631.3" r="1.25"/><circle cx="908.2" cy="633.9" r="1.25"/><circle cx="940.2" cy="610.8" r="1.25"/><circle cx="940.7" cy="613.4" r="1.25"/><circle cx="941.2" cy="615.9" r="1.25"/><circle cx="941.8" cy="618.5" r="1.25"/><circle cx="942.3" cy="621.1" r="1.25"/><circle cx="942.8" cy="623.6" r="1.25"/><circle cx="943.3" cy="626.2" r="1.25"/><circle cx="943.9" cy="628.8" r="1.25"/><circle cx="944.4" cy="631.3" r="1.25"/><circle cx="944.9" cy="633.9" r="1.25"/><circle cx="914.9" cy="613.0" r="1.25"/><circle cx="914.4" cy="615.4" r="1.25"/><circle cx="913.9" cy="617.8" r="1.25"/><circle cx="913.4" cy="620.2" r="1.25"/><circle cx="912.9" cy="622.6" r="1.25"/><circle cx="912.5" cy="625.0" r="1.25"/><circle cx="912.0" cy="627.4" r="1.25"/><circle cx="911.5" cy="629.8" r="1.25"/><circle cx="911.0" cy="632.2" r="1.25"/><circle cx="910.5" cy="634.6" r="1.25"/><circle cx="938.6" cy="613.0" r="1.25"/><circle cx="939.1" cy="615.4" r="1.25"/><circle cx="939.5" cy="617.8" r="1.25"/><circle cx="940.0" cy="620.2" r="1.25"/><circle cx="940.5" cy="622.6" r="1.25"/><circle cx="940.9" cy="625.0" r="1.25"/><circle cx="941.4" cy="627.4" r="1.25"/><circle cx="941.8" cy="629.8" r="1.25"/><circle cx="942.3" cy="632.2" r="1.25"/><circle cx="942.8" cy="634.6" r="1.25"/><circle cx="916.6" cy="615.3" r="1.25"/><circle cx="916.2" cy="617.5" r="1.25"/><circle cx="915.7" cy="619.7" r="1.25"/><circle cx="915.3" cy="621.9" r="1.25"/><circle cx="914.9" cy="624.1" r="1.25"/><circle cx="914.4" cy="626.4" r="1.25"/><circle cx="914.0" cy="628.6" r="1.25"/><circle cx="913.6" cy="630.8" r="1.25"/><circle cx="913.1" cy="633.0" r="1.25"/><circle cx="912.7" cy="635.2" r="1.25"/><circle cx="937.0" cy="615.3" r="1.25"/><circle cx="937.4" cy="617.5" r="1.25"/><circle cx="937.8" cy="619.7" r="1.25"/><circle cx="938.2" cy="621.9" r="1.25"/><circle cx="938.6" cy="624.1" r="1.25"/><circle cx="939.0" cy="626.4" r="1.25"/><circle cx="939.4" cy="628.6" r="1.25"/><circle cx="939.8" cy="630.8" r="1.25"/><circle cx="940.2" cy="633.0" r="1.25"/><circle cx="940.6" cy="635.2" r="1.25"/><circle cx="908.7" cy="633.9" r="1.25"/><circle cx="911.8" cy="632.4" r="1.25"/><circle cx="914.8" cy="631.2" r="1.25"/><circle cx="917.9" cy="630.3" r="1.25"/><circle cx="920.9" cy="629.6" r="1.25"/><circle cx="924.0" cy="629.2" r="1.25"/><circle cx="927.0" cy="629.1" r="1.25"/><circle cx="930.0" cy="629.2" r="1.25"/><circle cx="933.1" cy="629.6" r="1.25"/><circle cx="936.1" cy="630.3" r="1.25"/><circle cx="939.2" cy="631.2" r="1.25"/><circle cx="942.2" cy="632.4" r="1.25"/><circle cx="945.3" cy="633.9" r="1.25"/><circle cx="911.0" cy="637.9" r="1.25"/><circle cx="913.9" cy="636.6" r="1.25"/><circle cx="916.8" cy="635.6" r="1.25"/><circle cx="919.7" cy="634.9" r="1.25"/><circle cx="922.6" cy="634.4" r="1.25"/><circle cx="925.5" cy="634.1" r="1.25"/><circle cx="928.5" cy="634.1" r="1.25"/><circle cx="931.4" cy="634.4" r="1.25"/><circle cx="934.3" cy="634.9" r="1.25"/><circle cx="937.2" cy="635.6" r="1.25"/><circle cx="940.1" cy="636.6" r="1.25"/><circle cx="943.0" cy="637.9" r="1.25"/><circle cx="913.4" cy="642.5" r="1.25"/><circle cx="916.1" cy="641.5" r="1.25"/><circle cx="918.8" cy="640.7" r="1.25"/><circle cx="921.6" cy="640.1" r="1.25"/><circle cx="924.3" cy="639.8" r="1.25"/><circle cx="927.0" cy="639.7" r="1.25"/><circle cx="929.7" cy="639.8" r="1.25"/><circle cx="932.4" cy="640.1" r="1.25"/><circle cx="935.2" cy="640.7" r="1.25"/><circle cx="937.9" cy="641.5" r="1.25"/><circle cx="940.6" cy="642.5" r="1.25"/><circle cx="915.8" cy="647.8" r="1.25"/><circle cx="918.3" cy="647.0" r="1.25"/><circle cx="920.8" cy="646.5" r="1.25"/><circle cx="923.3" cy="646.1" r="1.25"/><circle cx="925.8" cy="645.9" r="1.25"/><circle cx="928.2" cy="645.9" r="1.25"/><circle cx="930.7" cy="646.1" r="1.25"/><circle cx="933.2" cy="646.5" r="1.25"/><circle cx="935.7" cy="647.0" r="1.25"/><circle cx="938.2" cy="647.8" r="1.25"/></g>
<path d="M919.7,602.1L933.8,602.1L940.2,610.8L941.3,621.1L939.0,626.1L914.6,626.1L912.3,621.1L913.3,610.8Z" fill="#1515e8"/>
<path d="M923.2,610.0L930.8,610.0L935.1,615.1L936.6,625.1L938.5,632.2L933.4,640.8L927.0,639.3L919.7,640.8L915.0,632.2L917.2,625.1L918.9,615.1Z" fill="#3aa82e"/>
<path d="M918.0,627.7L935.3,627.7L936.0,632.2L932.6,639.0L927.0,637.5L920.6,639.0L917.2,632.2Z" fill="#ee3a1c"/>
<path d="M921.0,636.1L933.0,632.1M921.0,632.1L933.0,636.1" stroke="#3aa82e" stroke-width="0.6" opacity="0.7"/>
<circle cx="927.0" cy="621.1" r="6.5" fill="none" stroke="#000" stroke-width="2.6"/>
<circle cx="927.0" cy="621.1" r="5.3" fill="#ee3a1c"/>
</g>
<rect x="900.6" y="603" width="52.799999999999955" height="50.5" fill="none" stroke="#4a4a4a" stroke-width="1.5"/>
<text x="890.3" y="624.8000000000001" stroke="#000" stroke-width="0.3" font-size="10.4" text-anchor="end" textLength="22.3" lengthAdjust="spacingAndGlyphs">0.00</text>
<text x="890.3" y="646.2" stroke="#000" stroke-width="0.3" font-size="10.4" text-anchor="end" textLength="25.9" lengthAdjust="spacingAndGlyphs">-15.0</text>
<text transform="translate(909.3000000000001,664.2) rotate(-90)" stroke="#000" stroke-width="0.3" font-size="10.4" text-anchor="end" textLength="25.9" lengthAdjust="spacingAndGlyphs">-15.0</text>
<text transform="translate(930.4000000000001,664.2) rotate(-90)" stroke="#000" stroke-width="0.3" font-size="10.4" text-anchor="end" textLength="22.3" lengthAdjust="spacingAndGlyphs">0.00</text>
<text transform="translate(952.1,664.2) rotate(-90)" stroke="#000" stroke-width="0.3" font-size="10.4" text-anchor="end" textLength="22.3" lengthAdjust="spacingAndGlyphs">15.0</text>
<path d="M896.1,621.1H900.6M896.1,642.5H900.6M905.6,653.5V658.0M926.7,653.5V658.0M948.4,653.5V658.0" stroke="#4a4a4a" stroke-width="1.1" fill="none"/>
<text x="917" y="591.4000000000001" stroke="#000" stroke-width="0.3" font-size="10.4" text-anchor="middle" textLength="107.3" lengthAdjust="spacingAndGlyphs">Field 4 (6.00°, 0.00°)</text>
</g>
</svg>

<!-- bottom bar -->

<div class="t" style="left:45.5px;top:703.5px;font-size:18.3px;color:#333">New</div>
<div class="abs" style="left:102px;top:698px;width:58px;height:28px;background:#fff;border-bottom:3px solid #0a0ae0"></div>
<div class="t" style="left:109px;top:702px;font-size:16.5px;color:#444">Main</div>
<div class="t" style="left:418px;top:701.5px;font-size:16.15px;color:#2e2e2e;-webkit-text-stroke:0.2px #2e2e2e">KostaCLOUD © 2023</div>

<!-- properties panel -->
<div class="abs" style="left:994px;top:201px;width:278px;height:1px;background:#dcdcdc"></div>
<div class="abs" style="left:994px;top:158px;width:108px;height:43px;background:#fff;border-radius:6px 6px 0 0;border-bottom:3.5px solid #0a0ae0"></div>
<div class="t" style="left:1011px;top:170px;font-size:16.3px;color:#333;-webkit-text-stroke:0.2px #333">Properties</div>
<div class="t" style="left:1120px;top:170px;font-size:16.4px;color:#3a6fd8;-webkit-text-stroke:0.2px #3a6fd8">Objects</div>
<div class="abs" style="left:1284px;top:202px;width:4px;height:92px;background:#8a8a8a;border-radius:2px"></div>

<div class="fs" style="left:992px;top:237px;height:58px"></div>
<div class="h2" style="left:1000px;top:225.8px;letter-spacing:0.12px">Trace Mode</div>
<div class="bg" style="left:1000px;top:271.7px;width:276.8px;height:38.4px"><div class="on" style="width:89px"></div></div>
<div class="lbl" style="left:1015px;top:283.6px;color:#fff">Imaging</div>
<div class="lbl" style="left:1103px;top:283.6px">Illumination</div>
<div class="lbl" style="left:1215px;top:283.6px">Cavity</div>

<div class="fs" style="left:992px;top:346px;height:105px"></div>
<div class="h2" style="left:999px;top:334.8px;letter-spacing:0.7px">Aperture</div>
<div class="lbl" style="left:1000px;top:391px">Type</div>
<div class="inp" style="left:1048px;top:380px;width:235px;height:38px"></div>
<div class="lbl" style="left:1065px;top:391px;color:#444">Entrance Pupil Diameter</div>
<svg class="abs" style="left:1268px;top:395px" width="12" height="9" viewBox="0 0 12 9"><path d="M1.5 1.5L6 6.5L10.5 1.5" stroke="#333" stroke-width="2" fill="none"/></svg>
<div class="lbl" style="left:1000px;top:439px">EP<span style="font-size:12.3px;position:relative;top:5px;margin-left:-1.5px">Diameter</span></div>
<div class="inp" style="left:1074px;top:429px;width:209px;height:36px"></div>
<div class="lbl" style="left:1087px;top:439px;color:#333">1.0000 mm</div>

<div class="fs" style="left:992px;top:501px;height:171px"></div>
<div class="h2" style="left:999px;top:489.8px;letter-spacing:0.5px">Image</div>
<div class="abs" style="left:1004px;top:544px;width:20px;height:20px;background:#2d6cf5;border-radius:3.5px"></div>
<svg class="abs" style="left:1004px;top:544px" width="20" height="20" viewBox="0 0 20 20"><path d="M4.8 10.4L8.4 14L15.2 6.2" stroke="#fff" stroke-width="2.6" fill="none" stroke-linecap="round" stroke-linejoin="round"/></svg>
<div class="lbl" style="left:1034px;top:546.8px">Image at Primary Image Location</div>
<div class="bg" style="left:1000px;top:600px;width:276.8px;height:38.4px"><div class="on" style="width:136px"></div></div>
<div class="lbl" style="left:1040px;top:611.8px;color:#fff">Paraxial</div>
<div class="lbl" style="left:1174px;top:611.8px">Centroid</div>
<div class="lbl" style="left:1000px;top:660px;letter-spacing:-0.12px">Stray Ray Length</div>
<div class="inp" style="left:1127px;top:649px;width:156px;height:37px"></div>
<div class="lbl" style="left:1140px;top:660px;color:#333">10.0000 mm</div>

<div class="fs" style="left:992px;top:723px;height:20px"></div>
<div class="h2" style="left:999px;top:710.6px;letter-spacing:0.5px">Pupil</div>


<svg class="abs" style="left:0;top:0" width="1288" height="726" viewBox="0 0 1288 726" fill="none">
<!-- flamingo -->
<g stroke="#fff" stroke-linecap="round" fill="none">
<ellipse cx="174.4" cy="98" rx="5.5" ry="2.6" transform="rotate(-12 174.4 98)" fill="#fff" stroke="none"/>
<path d="M178.6 96.6Q176.6 93.4 177.3 91Q178.2 88.6 180.2 89.3Q181.9 90.2 181.4 92.9" stroke-width="1.4"/>
<path d="M174.6 100L175.3 108.6M173.2 100.4L172.7 104" stroke-width="0.9"/>
</g>
<!-- move icon -->
<g stroke="#fff" stroke-width="2" stroke-linecap="round" stroke-linejoin="round">
<path d="M862.1 176.5V189.3M855.7 182.9H868.5"/>
</g>
<g fill="#fff" stroke="#fff" stroke-width="0.8" stroke-linejoin="round">
<path d="M862.1 174.7L865 178H859.2Z"/><path d="M862.1 191.1L865 187.8H859.2Z"/>
<path d="M854.1 182.9L857.4 180V185.8Z"/><path d="M870.1 182.9L866.8 180V185.8Z"/>
</g>
<!-- home -->
<path d="M963 171.4L971.9 179.4H969.9V186.6H965.1V182.2H960.9V186.6H956.1V179.4H954.1Z" fill="#fff" stroke="#fff" stroke-width="0.8" stroke-linejoin="round"/>
<!-- rotate -->
<g stroke="#fff" stroke-width="2" stroke-linecap="round" stroke-linejoin="round">
<path d="M961.2 278.4V293.5Q961.2 301.8 952.9 301.8H938.4"/>
<path d="M957.2 282.2L961.2 278L965.2 282.2M942.3 297.8L938.2 301.8L942.3 305.8"/>
</g>
<!-- tab icons -->
<g fill="#111">
<path d="M903 573.9L907.6 570.1V577.7Z"/><path d="M939 573.9L934.4 570.1V577.7Z"/>
<path d="M957.6 570.7L964.2 573.7L957.6 576.7L951 573.7Z"/>
<path d="M951 576.4L952.9 575.5L957.6 577.7L962.3 575.5L964.2 576.4L957.6 579.4Z"/>
<path d="M951 578.2L952.9 577.3L957.6 579.5L962.3 577.3L964.2 578.2L957.6 581.2Z" opacity="0.0"/>
<circle cx="961.8" cy="568.6" r="1" fill="#444"/>
<path d="M972.3 568.7H975.8L976.4 567.3H979.6L980.2 568.7H983.7V570.3H972.3Z"/>
<path d="M973.1 571.2H982.9L982.3 579.3Q982.2 580.4 981.1 580.4H974.9Q973.8 580.4 973.7 579.3Z"/>
</g>
<path d="M975.7 572.4V579M978 572.4V579M980.3 572.4V579" stroke="#fff" stroke-width="1.05"/>
<!-- New icon -->
<g fill="#2b2b2b">
<path d="M29.6 706.6L39.2 710.8L29.6 715L20 710.8Z" stroke="#2b2b2b" stroke-width="1" stroke-linejoin="round"/>
<path d="M21 714.4L23.6 713.3L29.6 715.9L35.6 713.3L38.2 714.4Q39.6 715 38.2 715.7L30.4 719.1Q29.6 719.4 28.8 719.1L21 715.7Q19.6 715 21 714.4Z" transform="translate(0,1.3)"/>
</g>
<path d="M37.6 701.6V707M34.9 704.3H40.3" stroke="#2b2b2b" stroke-width="1.5" stroke-linecap="round"/>
<!-- window corner -->
<path d="M0 716Q0 726 9 726H0Z" fill="#111"/>
</svg>
</body></html>
